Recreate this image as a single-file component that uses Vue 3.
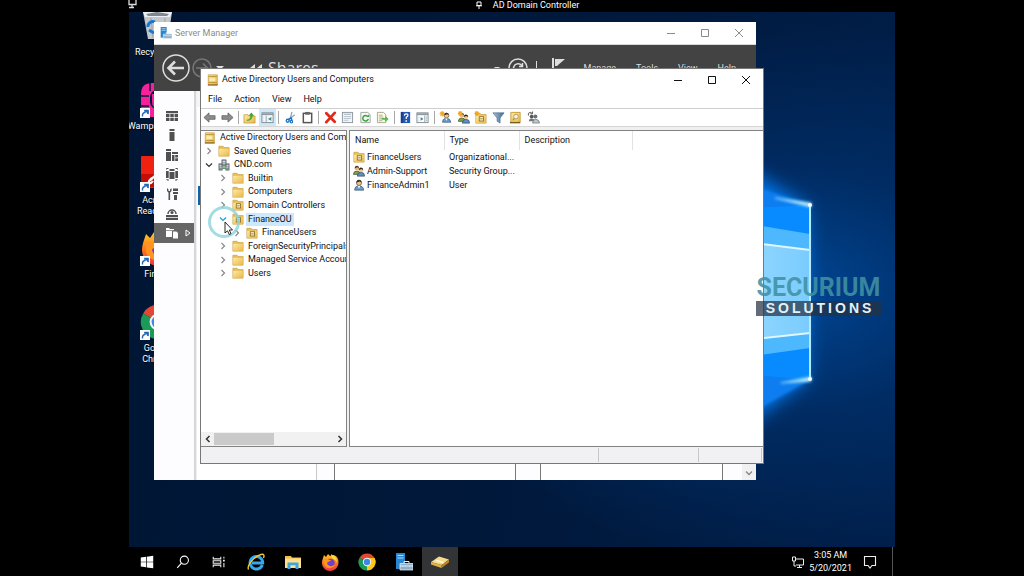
<script setup>
const desktopIcons = [
  { icon: 'd-bin', label: 'Recycle Bin' },
  { icon: 'd-wamp', label: 'Wampserver64', shortcut: true },
  { icon: 'd-acrobat', label: 'Acrobat Reader DC', shortcut: true },
  { icon: 'firefox', label: 'Firefox', shortcut: true },
  { icon: 'chrome', label: 'Google Chrome', shortcut: true },
]

const sideItems = ['s-dash', 's-local', 's-all', 's-ad', 's-dns', 's-iis', 's-file']

const toolGroups = [
  [['t-back', 'Back'], ['t-fwd', 'Forward']],
  [['t-up', 'Up one level'], ['t-tree', 'Show console tree']],
  [['t-cut', 'Cut'], ['t-paste', 'Paste']],
  [['t-del', 'Delete'], ['t-prop', 'Properties'], ['t-refresh', 'Refresh'], ['t-export', 'Export list']],
  [['t-help', 'Help'], ['t-pane', 'Show action pane']],
  [['t-user', 'New user'], ['t-group', 'New group'], ['t-ou', 'New organizational unit'],
    ['t-filter', 'Filter'], ['t-find', 'Find'], ['t-add', 'Add to group']],
]

const tree = [
  { level: 0, icon: 'console', label: 'Active Directory Users and Computers' },
  { level: 1, icon: 'folder', label: 'Saved Queries' },
  { level: 1, icon: 'domain', label: 'CND.com', open: true },
  { level: 2, icon: 'folder', label: 'Builtin' },
  { level: 2, icon: 'folder', label: 'Computers' },
  { level: 2, icon: 'ou', label: 'Domain Controllers' },
  { level: 2, icon: 'ou', label: 'FinanceOU', open: true, selected: true },
  { level: 3, icon: 'ou', label: 'FinanceUsers' },
  { level: 2, icon: 'folder', label: 'ForeignSecurityPrincipals' },
  { level: 2, icon: 'folder', label: 'Managed Service Accounts' },
  { level: 2, icon: 'folder', label: 'Users' },
]

const rows = [
  { icon: 'ou', name: 'FinanceUsers', type: 'Organizational...' },
  { icon: 'group', name: 'Admin-Support', type: 'Security Group...' },
  { icon: 'user', name: 'FinanceAdmin1', type: 'User' },
]

const taskItems = [
  { icon: 'start', label: 'Start', kind: 'small' },
  { icon: 'search', label: 'Search', kind: 'small' },
  { icon: 'taskview', label: 'Task View', kind: 'small' },
  { icon: 'ie', label: 'Internet Explorer' },
  { icon: 'explorer', label: 'File Explorer' },
  { icon: 'firefox', label: 'Firefox' },
  { icon: 'chrome', label: 'Google Chrome' },
  { icon: 'server', label: 'Server Manager' },
  { icon: 'toolbox', label: 'Active Directory Users and Computers', kind: 'active' },
]
</script>

<template>
  <div class="screen">
    <svg class="defs" aria-hidden="true">
      <defs>
        <linearGradient id="gold" x1="0" y1="0" x2="1" y2="1">
          <stop offset="0" stop-color="#ffeaa0" /><stop offset="1" stop-color="#e8b94c" />
        </linearGradient>
        <linearGradient id="fox" x1="0" y1="0" x2="0" y2="1">
          <stop offset="0" stop-color="#ffc928" /><stop offset=".5" stop-color="#ff7a1c" /><stop offset="1" stop-color="#f0304a" />
        </linearGradient>
        <linearGradient id="steel" x1="0" y1="0" x2="1" y2="0">
          <stop offset="0" stop-color="#a9c4dc" /><stop offset="1" stop-color="#40688f" />
        </linearGradient>
      </defs>

      <symbol id="d-bin" viewBox="0 0 36 36">
        <path d="M3 4 32 4 28 31 8 31Z" fill="#c3c8cc" />
        <path d="M3 4 17 1 32 4 30 9 5 9Z" fill="#eef1f3" />
        <path d="M6 6 17 4 29 6 27 8 8 8Z" fill="#7d8890" />
        <path d="M11 10 13 30M25 10 23 30" stroke="#a6adb2" stroke-width="1.500" />
        <path d="M8 19a5 5 0 0 1 7-5M17 16l-1 6M14 25l-5-3" stroke="#1878d0" stroke-width="3" fill="none" />
      </symbol>
      <symbol id="d-wamp" viewBox="0 0 36 36">
        <path d="M12 1h12q11 0 11 11v12q0 11-11 11H12Q1 35 1 24V12Q1 1 12 1Z" fill="#f8209b" />
        <path d="M1 14h8M10 1v8M1 24h8" stroke="#001a3d" stroke-width="1.500" />
        <rect x="10" y="8" width="18" height="19" rx="7" fill="#001a3d" />
        <path d="M14 12v8q0 4 4 4t4-4v-8" stroke="#f8209b" stroke-width="4" fill="none" />
      </symbol>
      <symbol id="d-acrobat" viewBox="0 0 36 36">
        <rect x="1" y="0" width="34" height="32" rx="1" fill="#f0210f" />
        <path d="M1 18h34v13H1Z" fill="#c40e05" />
        <path d="M9 25c5-2 9-10 10-17 0-4-3-3-2 1 2 8 7 13 12 12 4-1 0-4-6-3-7 1-12 4-14 7-1 3 2 3 4 0" fill="none" stroke="#fff" stroke-width="2" />
      </symbol>
      <symbol id="firefox" viewBox="0 0 18 18">
        <path d="M2 5 3 2 5 4 7 1 9 3C14 0 18 5 17.5 10 17 15 13 18 9 18S1 14.500 1 10C1 8 1.500 6.500 2 5Z" fill="url(#fox)" />
        <circle cx="9.500" cy="10" r="4.200" fill="#6f3fd0" />
        <path d="M3 6c3-1 4 1 7 1-1 2-3 1-4 3 1 4 6 4 8 1-1 5-9 6-11 0Z" fill="#ff941f" />
        <path d="M10 1c3 2 6 3 6 9-1-3-3-4-5-5Z" fill="#ffdc3c" />
      </symbol>
      <symbol id="chrome" viewBox="0 0 18 18">
        <path d="M9 9 1.600 4.700A8.500 8.500 0 0 1 16.400 4.700Z" fill="#df4835" />
        <path d="M9 9 16.400 4.700A8.500 8.500 0 0 1 9 17.500Z" fill="#fbc918" />
        <path d="M9 9 9 17.500A8.500 8.500 0 0 1 1.600 4.700Z" fill="#1c9b57" />
        <path d="M9 5h7.600q1.300 3 .5 5.500L12.500 11Z" fill="#fbc918" />
        <circle cx="9" cy="9" r="4.200" fill="#f3f6f8" /><circle cx="9" cy="9" r="3.200" fill="#3f86e8" />
      </symbol>

      <symbol id="s-dash" viewBox="0 0 14 14">
        <path d="M1 2h12v2.200H1ZM1 5h3.500v3H1ZM5.300 5h3.500v3H5.300ZM9.600 5H13v3H9.600ZM1 8.800h3.500V12H1ZM5.300 8.800h3.500V12H5.300ZM9.600 8.800H13V12H9.600Z" fill="#505050" />
      </symbol>
      <symbol id="s-local" viewBox="0 0 14 14"><path d="M4.500 1h5v2h-5ZM4.500 4h5v9h-5Z" fill="#505050" /></symbol>
      <symbol id="s-all" viewBox="0 0 14 14">
        <path d="M1 1h5v2H1ZM1 4h5v9H1ZM7 4h6v2H7ZM7 7h2.500v6H7ZM10.200 7H13v2.500h-2.800ZM10.200 10.200H13V13h-2.800Z" fill="#505050" />
      </symbol>
      <symbol id="s-ad" viewBox="0 0 14 14">
        <path d="M4.500 2h5v2h-5ZM4.500 5h5v7h-5ZM1 4h2.700v7H1ZM10.300 4H13v7h-2.700Z" fill="#505050" />
        <path d="M1.500 2.500V1.500h2M12.500 2.500V1.500h-2M2 12v1h2M12 12v1h-2" stroke="#505050" fill="none" />
      </symbol>
      <symbol id="s-dns" viewBox="0 0 14 14">
        <path d="M2 1v3l1.500 1.500V13h1.600V5.500L6.500 4V1L5 2.500v1.500H3.500V2.500ZM8 1.500h5V4H8ZM8 5h5v2H8ZM9 8h3v5H9Z" fill="#505050" />
      </symbol>
      <symbol id="s-iis" viewBox="0 0 14 14">
        <path d="M3 7a4 4 0 1 1 8 0" stroke="#505050" stroke-width="1.500" fill="none" />
        <circle cx="7" cy="5.500" r="1.600" fill="#505050" /><path d="M1 8h12v2H1ZM1 10.800h12V13H1Z" fill="#505050" />
      </symbol>
      <symbol id="s-file" viewBox="0 0 14 14">
        <path d="M1 2h3l1 1h4v8H1Z" fill="#fff" /><path d="M1 4.500h8" stroke="#9a9a9a" /><path d="M7.500 5h4l2 2v6h-6Z" fill="#fff" stroke="#666" />
      </symbol>

      <symbol id="t-back" viewBox="0 0 14 14">
        <path d="M1 7 6.500 2v3H13v4H6.500v3Z" fill="#8c8c8c" stroke="#5f5f5f" stroke-width=".8" />
      </symbol>
      <symbol id="t-fwd" viewBox="0 0 14 14">
        <path d="M13 7 7.500 2v3H1v4h6.500v3Z" fill="#8c8c8c" stroke="#5f5f5f" stroke-width=".8" />
      </symbol>
      <symbol id="t-up" viewBox="0 0 14 14">
        <path d="M1 4h4.500l1 1.500H13V13H1Z" fill="url(#gold)" stroke="#b98f35" stroke-width=".7" />
        <path d="M4 9.500c3 0 4-2 4-4.500H6L9 1.500 12 5h-1.700c0 3-2 5.500-6.300 5.500Z" fill="#3fa832" />
      </symbol>
      <symbol id="t-tree" viewBox="0 0 14 14">
        <rect x="1" y="2" width="12" height="10.500" fill="#fff" stroke="#7d8790" />
        <path d="M1 3.500h12" stroke="#8d98a1" stroke-width="2" /><path d="M5.500 5v7" stroke="#8d98a1" />
        <path d="M3 6v5M7.500 6v5M11 6v5" stroke="#b9c2c8" stroke-dasharray="1 1" /><path d="M11 6.500v4L7.500 8.500Z" fill="#3a8e8a" />
      </symbol>
      <symbol id="t-cut" viewBox="0 0 14 14">
        <path d="M8.500 1 7 7.500M11.500 4 5.500 9" stroke="#8aa2b5" stroke-width="1.300" />
        <path d="M7.500 7 4.500 9.500M7.500 7 8.500 10" stroke="#1672c6" stroke-width="1.600" />
        <circle cx="4" cy="10.500" r="1.600" fill="none" stroke="#1672c6" stroke-width="1.400" />
        <circle cx="8" cy="11.500" r="1.300" fill="none" stroke="#1672c6" stroke-width="1.300" />
      </symbol>
      <symbol id="t-paste" viewBox="0 0 14 14">
        <rect x="2.500" y="2.500" width="9" height="10" fill="#fff" stroke="#555" stroke-width="1.600" />
        <path d="M4.500 1h5v3h-5Z" fill="#666" />
      </symbol>
      <symbol id="t-del" viewBox="0 0 14 14">
        <path d="M2.500 2.500 11.500 11.500M11.500 2 2.500 12" stroke="#df2a1c" stroke-width="3" stroke-linecap="round" />
      </symbol>
      <symbol id="t-prop" viewBox="0 0 14 14">
        <rect x="1.500" y="1.500" width="11" height="11" fill="#f3f6f8" stroke="#8b969e" />
        <path d="M3 3.500h8" stroke="#9db0be" /><path d="M3 6h8M3 8h8M3 10h5" stroke="#b8c2c9" />
      </symbol>
      <symbol id="t-refresh" viewBox="0 0 14 14">
        <path d="M2 1.500h7.500L12 4v8.500H2Z" fill="#f7faf7" stroke="#9aa39d" />
        <path d="M9.500 6A3 3 0 1 0 10 8.500" fill="none" stroke="#37a33b" stroke-width="1.600" /><path d="M8 6.500h3V3.500Z" fill="#37a33b" />
      </symbol>
      <symbol id="t-export" viewBox="0 0 14 14">
        <path d="M1.500 1.500H8L10.500 4v8.500h-9Z" fill="#fffde8" stroke="#a5a38b" />
        <path d="M3 4.500h4M3 6.500h5M3 8.500h3M3 10.500h4" stroke="#a9a78f" /><path d="M6 7.500h4V5l3.500 3.500L10 12V9.500H6Z" fill="#57b947" />
      </symbol>
      <symbol id="t-help" viewBox="0 0 14 14">
        <rect x="2" y="1" width="10" height="12" fill="#2557b0" /><path d="M2 1h2v12H2Z" fill="#173c86" />
        <path d="M5.800 5q0-2 2-2t1.800 1.800q0 1-1.800 2V8.500" stroke="#fff" stroke-width="1.300" fill="none" /><path d="M7 10h1.600v1.500H7Z" fill="#fff" />
      </symbol>
      <symbol id="t-pane" viewBox="0 0 14 14">
        <rect x="1" y="2" width="12" height="10.500" fill="#fff" stroke="#7d8790" /><path d="M1 3.500h12" stroke="#8d98a1" stroke-width="2" />
        <path d="M9.500 5v7" stroke="#8d98a1" /><path d="M3 6v5" stroke="#b9c2c8" stroke-dasharray="1 1" />
        <path d="M5 6.500v4L8 8.500Z" fill="#3a8e8a" /><path d="M11.300 6v5" stroke="#8d98a1" stroke-dasharray="1 1" />
      </symbol>
      <symbol id="user" viewBox="0 0 14 14">
        <path d="M2 13q0-5 5-5t5.500 5Z" fill="#6b9cc8" stroke="#35506a" stroke-width=".8" />
        <path d="M5.500 8 7 11 8.500 8Z" fill="#fff" /><circle cx="7" cy="4.600" r="3" fill="#f0c48e" stroke="#3f3520" stroke-width=".7" />
        <path d="M4 4.500Q4 1 7 1t3 3L8 3Z" fill="#3a3025" />
      </symbol>
      <symbol id="group" viewBox="0 0 14 14">
        <path d="M.500 11q0-4 4-4t4 4Z" fill="#7fa34a" stroke="#35451f" stroke-width=".7" /><circle cx="4.500" cy="4" r="2.500" fill="#e6b67d" />
        <path d="M1.800 4Q2 .800 4.600 1T7 4L5 2.600Z" fill="#4b3a22" />
        <path d="M5 13q0-4.500 4.300-4.500T13.500 13Z" fill="#5d8fc4" stroke="#263e58" stroke-width=".7" /><circle cx="9.300" cy="6" r="2.500" fill="#f0c48e" />
        <path d="M6.600 6q.2-3.200 2.800-3T12 6L9.800 4.600Z" fill="#30281e" />
      </symbol>
      <symbol id="t-user" viewBox="0 0 14 14"><use href="#user" x="2" width="12" height="14" /><path d="M3.500 0v6M.500 3h6M1.500 1l4 4M5.500 1l-4 4" stroke="#f4a51c" stroke-width="1.200" /></symbol>
      <symbol id="t-group" viewBox="0 0 14 14"><use href="#group" x="1" y="1" width="13" height="13" /><path d="M3.500 0v5M1 2.500h5M1.700.7l3.600 3.600M5.300.7 1.700 4.300" stroke="#f4a51c" stroke-width="1.200" /></symbol>
      <symbol id="folder" viewBox="0 0 14 14">
        <path d="M1 1.500h5l1 1.500H13v10H1Z" fill="#e9bf57" stroke="#c4993c" stroke-width=".7" /><path d="M1.400 4.500H12.600v8.100H1.400Z" fill="url(#gold)" />
      </symbol>
      <symbol id="ou" viewBox="0 0 14 14">
        <path d="M1 1.500h5l1 1.500H13v10H1Z" fill="#e9bf57" stroke="#c4993c" stroke-width=".7" /><path d="M1.400 4.500H12.600v8.100H1.400Z" fill="url(#gold)" />
        <rect x="5" y="5.500" width="5" height="5" fill="#fff6d0" stroke="#8a6f28" /><path d="M6 8h3" stroke="#8a6f28" />
      </symbol>
      <symbol id="t-ou" viewBox="0 0 14 14"><use href="#ou" x="1" y="1" width="13" height="13" /><path d="M3 0v5M.500 2.500h5M1.200.7l3.600 3.600M4.800.7 1.200 4.300" stroke="#f4a51c" stroke-width="1.200" /></symbol>
      <symbol id="t-filter" viewBox="0 0 14 14"><path d="M1 2h12L8.700 7.500V13L5.500 11V7.500Z" fill="url(#steel)" stroke="#4b6c8a" stroke-width=".7" /></symbol>
      <symbol id="t-find" viewBox="0 0 14 14">
        <path d="M2 1.500h10v11H2Z" fill="url(#gold)" stroke="#c79a35" /><path d="M1 12.500h11" stroke="#7d5d18" stroke-width="1.500" />
        <circle cx="7.500" cy="6" r="2.500" fill="#f2f3e6" stroke="#b59c58" /><path d="M5.800 8 4 10" stroke="#a08a4c" stroke-width="1.300" />
      </symbol>
      <symbol id="t-add" viewBox="0 0 14 14">
        <path d="M1.500 5V2.500Q3 .5 6 2.500M6 .5V3H3.500" fill="none" stroke="#555" /><circle cx="5" cy="6" r="2" fill="#555" /><circle cx="9" cy="6" r="2.200" fill="#6f6f6f" />
        <path d="M2 11q0-3 3-3t4 3Z" fill="#777" /><path d="M6 13q0-4 3.500-4t4 4Z" fill="#b9c8d2" stroke="#666" stroke-width=".7" />
      </symbol>
      <symbol id="console" viewBox="0 0 14 14">
        <path d="M1.500 1H12v12H1.500Z" fill="url(#gold)" stroke="#bd902e" stroke-width=".8" /><path d="M2 3h9.500M2 10h9.500" stroke="#b88a2a" />
        <path d="M3.500 5h6v3h-6Z" fill="#fff0b8" /><path d="M1 12.700h11.500" stroke="#80611c" stroke-width="1.200" />
      </symbol>
      <symbol id="domain" viewBox="0 0 14 14">
        <path d="M4.500 1h5v7h-5ZM1 5.500h4V13H1ZM9 5.500h4V13H9Z" fill="#8b949b" stroke="#596066" stroke-width=".7" />
        <path d="M5.500 2.800h3M5.500 4.800h3M2 7.500h2M2 9.500h2M10 7.500h2M10 9.500h2" stroke="#e7eff4" /><path d="M5 11h4M7 8v3" stroke="#4ba15c" stroke-width="1.300" />
      </symbol>

      <symbol id="start" viewBox="0 0 18 18"><path d="M2 4 8 3.200v5.400H2ZM8.800 3.100 16 2v6.600H8.800ZM2 9.400h6V15l-6-.9ZM8.800 9.400H16V16l-7.200-.9Z" fill="#fff" /></symbol>
      <symbol id="search" viewBox="0 0 18 18"><circle cx="10.500" cy="7" r="4.600" fill="none" stroke="#fff" stroke-width="1.200" /><path d="M7.300 10.300 2.500 15.500" stroke="#fff" stroke-width="1.300" /></symbol>
      <symbol id="taskview" viewBox="0 0 18 18">
        <path d="M2.500 3v2.500H11V3M2.500 15v-2.500H11V15M2.500 7.500H11v3H2.500ZM14.500 3v2M14.500 10v5" stroke="#eee" stroke-width="1.200" fill="none" /><path d="M13.500 6.500h2v2h-2Z" fill="#eee" />
      </symbol>
      <symbol id="ie" viewBox="0 0 18 18">
        <path d="M15.300 12A6.300 6.300 0 1 1 15.700 10H5" fill="none" stroke="#36a8ec" stroke-width="3" />
        <path d="M1.500 16.500C-.5 12 8 3 14 1.500c3-.8 3.500 1 2.500 3.500" fill="none" stroke="#f6c832" stroke-width="1.400" />
      </symbol>
      <symbol id="explorer" viewBox="0 0 18 18">
        <path d="M1 3h6l1 1.500h9V15H1Z" fill="#f1bd45" /><path d="M1 5.500h16V15H1Z" fill="#ffe08c" /><path d="M3.500 16V9.500h11V16h-3v-3.700H6.500V16Z" fill="#3fa5e0" />
      </symbol>
      <symbol id="server" viewBox="0 0 18 18">
        <path d="M1 0h9v16H1Z" fill="#2a86cf" /><path d="M2.500 2.500h6M2.500 5h6" stroke="#a9d8f7" stroke-width="1.200" />
        <path d="M5 10.500h13V17H5Z" fill="#8eafc8" stroke="#dceaf3" stroke-width=".8" /><path d="M9 10V8.500h5V10M5 13h13" stroke="#e8f2f8" fill="none" />
      </symbol>
      <symbol id="toolbox" viewBox="0 0 18 18">
        <path d="M0 9 8 3.500 18 6.500 10.500 12Z" fill="#f5dc8c" /><path d="M0 9 10.500 12v3L0 11.500Z" fill="#e0b24d" /><path d="M10.500 12 18 6.500v3L10.500 15Z" fill="#b98328" />
        <path d="M5 7.500 13 9.700" stroke="#fff8d5" stroke-width="1.500" />
      </symbol>
    </svg>

    <header class="session">
      <svg class="session-monitor" viewBox="0 0 10 10"><path d="M2 0V4.500H9V0M5 5v2M2 7.500h5" stroke="#ddd" fill="none" stroke-width="1.300" /></svg>
      <svg class="session-pin" viewBox="0 0 8 8"><path d="M2 1h4v3.500H2ZM1 4.800h6M4 5v3" stroke="#fff" fill="none" /></svg>
      <span>AD Domain Controller</span>
    </header>

    <main class="desktop">
      <svg class="wallpaper" viewBox="0 0 150 535" preserveAspectRatio="none" aria-hidden="true">
        <defs>
          <filter id="soft" x="-40%" y="-40%" width="180%" height="180%"><feGaussianBlur stdDeviation="9" /></filter>
          <filter id="glint" x="-50%" y="-50%" width="200%" height="200%"><feGaussianBlur stdDeviation="1.500" /></filter>
          <linearGradient id="pale" x1="0" y1="0" x2="1" y2="0"><stop offset="0" stop-color="#92d7ff" /><stop offset="1" stop-color="#7accfe" /></linearGradient>
        </defs>
        <path d="M0 155 62 194 62 368 0 415Z" fill="#0074e6" filter="url(#soft)" />
        <path d="M0 171 65 193 65 368 0 405Z" fill="#0a7df0" filter="url(#glint)" />
        <path d="M0 196 65 193V368L0 362Z" fill="#078bff" />
        <path d="M0 211 65 222V336L0 345Z" fill="#4eb8ff" />
        <path d="M0 230 65 238V321L0 328Z" fill="url(#pale)" />
        <path d="M0 230 65 238M0 328 65 321" stroke="#dff6ff" stroke-width="2" />
        <path d="M65 193V368" stroke="#b5e9ff" stroke-width="2" />
        <path d="M30 186 66 191 66 195ZM36 371 66 365 66 369Z" fill="#c4f0ff" stroke="#8fdcff" filter="url(#glint)" />
        <circle cx="65" cy="193" r="2" fill="#fff" /><circle cx="65" cy="367" r="2" fill="#fff" />
      </svg>

      <ul class="shortcuts">
        <li v-for="item in desktopIcons" :key="item.label">
          <span class="shortcut-pic">
            <svg><use :href="'#' + item.icon" /></svg>
            <svg v-if="item.shortcut" class="badge" viewBox="0 0 10 10">
              <rect width="10" height="10" fill="#fff" /><path d="M2.500 8.500Q2 5 5 4.500V2.500H8V6" stroke="#2468b5" stroke-width="1.400" fill="none" /><path d="M4 2h4.500v4.500Z" fill="#2468b5" />
            </svg>
          </span>
          <span class="shortcut-label">{{ item.label }}</span>
        </li>
      </ul>

      <section class="window manager" aria-label="Server Manager">
        <div class="titlebar">
          <svg class="title-icon"><use href="#server" /></svg>
          <h2>Server Manager</h2>
          <div class="controls">
            <button aria-label="Minimize"><svg viewBox="0 0 10 10"><path d="M1 5.500h8" /></svg></button>
            <button aria-label="Maximize"><svg viewBox="0 0 10 10"><path d="M1.500 1.500h7v7h-7Z" /></svg></button>
            <button aria-label="Close"><svg viewBox="0 0 10 10"><path d="M1 1 9 9M9 1 1 9" /></svg></button>
          </div>
        </div>
        <div class="banner">
          <button class="nav-back" aria-label="Back">
            <svg viewBox="0 0 28 28"><circle cx="14" cy="14" r="13" /><path d="M22 14H7M13 7.500 6.500 14 13 20.500" stroke-width="2.600" /></svg>
          </button>
          <button class="nav-fwd" aria-label="Forward">
            <svg viewBox="0 0 20 20"><circle cx="10" cy="10" r="9" /><path d="M4 10H15M11 5.500 15.500 10 11 14.500" /></svg>
          </button>
          <svg class="caret" viewBox="0 0 8 8"><path d="M0 2H8L4 6Z" /></svg>
          <svg class="crumb-sep" viewBox="0 0 12 8"><path d="M0 4 5 0V8ZM7 4 12 0V8Z" /></svg>
          <span class="crumb">Shares</span>
          <svg class="caret push" viewBox="0 0 8 8"><path d="M1 3H7L4 6Z" /></svg>
          <button class="reload" aria-label="Refresh">
            <svg viewBox="0 0 20 20"><circle cx="10" cy="10" r="9" /><path d="M14 8A4.500 4.500 0 1 0 14.500 11M14.500 5v3.500H11" /></svg>
          </button>
          <span class="bar"></span>
          <button class="flag" aria-label="Notifications">
            <svg viewBox="0 0 14 22"><path d="M1 1V22" stroke="#ddd" stroke-width="2" /><path d="M3 2H13L5 9H3Z" fill="#ddd" /></svg>
          </button>
          <nav>
            <button>Manage</button><button>Tools</button><button>View</button><button>Help</button>
          </nav>
        </div>
        <div class="manager-body">
          <div class="side">
            <button v-for="(s, i) in sideItems" :key="s" :class="{ on: i === 6 }" :aria-label="'Section ' + (i + 1)">
              <svg class="side-icon"><use :href="'#' + s" /></svg>
              <svg v-if="i === 6" class="side-arrow" viewBox="0 0 6 8"><path d="M1 1 5 4 1 7Z" fill="none" stroke="#fff" /></svg>
            </button>
          </div>
          <div class="rail"></div>
          <div class="tiles">
            <div class="tile a"><i></i></div>
            <div class="gap b"></div>
            <div class="tile c"></div>
            <div class="gap d"></div>
            <div class="tile e"></div>
            <div class="gap f"></div>
          </div>
          <div class="vscroll"><svg viewBox="0 0 8 8"><path d="M1 2.500 4 5.500 7 2.500" fill="none" stroke="#888" stroke-width="1.300" /></svg></div>
        </div>
      </section>

      <section class="window aduc" aria-label="Active Directory Users and Computers">
        <div class="titlebar">
          <svg class="title-icon"><use href="#console" /></svg>
          <h1>Active Directory Users and Computers</h1>
          <div class="controls">
            <button aria-label="Minimize"><svg viewBox="0 0 10 10"><path d="M1 5.500h8" /></svg></button>
            <button aria-label="Maximize"><svg viewBox="0 0 10 10"><path d="M1.500 1.500h7v7h-7Z" /></svg></button>
            <button aria-label="Close"><svg viewBox="0 0 10 10"><path d="M1 1 9 9M9 1 1 9" /></svg></button>
          </div>
        </div>
        <nav class="menu">
          <button>File</button><button>Action</button><button>View</button><button>Help</button>
        </nav>
        <div class="toolbar">
          <div class="tools" role="toolbar">
            <template v-for="(group, g) in toolGroups" :key="g">
              <span v-if="g" class="tool-sep"></span>
              <button v-for="[icon, label] in group" :key="icon" :class="{ pressed: icon === 't-tree' }" :aria-label="label">
                <svg><use :href="'#' + icon" /></svg>
              </button>
            </template>
          </div>
        </div>
        <div class="panes">
          <div class="pane tree-pane">
            <ul class="tree" role="tree">
              <li v-for="node in tree" :key="node.label" role="treeitem" :class="['l' + node.level, { selected: node.selected, open: node.open }]">
                <button v-if="node.level" class="twist" :aria-label="'Toggle ' + node.label">
                  <svg viewBox="0 0 8 8"><path :d="node.open ? 'M1 2.500 4 5.500 7 2.500' : 'M2.500 1 5.500 4 2.500 7'" /></svg>
                </button>
                <svg class="node-icon"><use :href="'#' + node.icon" /></svg>
                <span class="node-label">{{ node.label }}</span>
              </li>
            </ul>
            <div class="hscroll">
              <button aria-label="Scroll left"><svg viewBox="0 0 8 8"><path d="M5.500 1 2.500 4 5.500 7" /></svg></button>
              <span class="track"><span class="thumb"></span></span>
              <button aria-label="Scroll right"><svg viewBox="0 0 8 8"><path d="M2.500 1 5.500 4 2.500 7" /></svg></button>
            </div>
          </div>
          <div class="pane list-pane">
            <table>
              <colgroup><col class="c-name" /><col class="c-type" /><col class="c-desc" /><col /></colgroup>
              <thead><tr><th>Name</th><th>Type</th><th>Description</th><th></th></tr></thead>
              <tbody>
                <tr v-for="r in rows" :key="r.name">
                  <td><span class="name"><svg><use :href="'#' + r.icon" /></svg>{{ r.name }}</span></td>
                  <td>{{ r.type }}</td><td></td><td></td>
                </tr>
              </tbody>
            </table>
          </div>
        </div>
        <footer class="status"><span class="s-main"></span><span class="s-mid"></span><span class="s-end"></span></footer>
      </section>

      <svg class="pointer" viewBox="0 0 36 36" aria-hidden="true">
        <circle cx="17" cy="17" r="14.500" fill="none" stroke="#8fd3da" stroke-opacity=".8" stroke-width="3" />
        <path d="M18 17V28L20.500 25.800 22.300 29.500 24 28.700 22.300 25H25.500Z" fill="#fff" stroke="#111" stroke-width=".9" />
      </svg>

      <div class="watermark"><strong>SECURIUM</strong><span>SOLUTIONS</span></div>
    </main>

    <footer class="taskbar">
      <div class="tasks">
        <button v-for="t in taskItems" :key="t.icon" :class="t.kind" :aria-label="t.label"><svg><use :href="'#' + t.icon" /></svg></button>
      </div>
      <div class="tray">
        <svg class="net" viewBox="0 0 14 14"><path d="M5 4h7.500v6H5M8.500 10v2.500M6 12.500h5" fill="none" stroke="#eee" /><path d="M1.500 2h3v4h-3ZM3 6v5h2" fill="none" stroke="#eee" /></svg>
        <time>3:05 AM<br />5/20/2021</time>
        <svg class="note" viewBox="0 0 14 14"><path d="M1.500 1.500h11v9H9L7 13 5 10.500H1.500Z" fill="none" stroke="#eee" stroke-width="1.100" /></svg>
        <span class="peek"></span>
      </div>
    </footer>
  </div>
</template>

<style>
html, body { margin: 0; background: #000; }
</style>

<style scoped>
* { box-sizing: border-box; }
.screen {
  display: flex; flex-direction: column; height: 100vh; padding: 0 129px; background: #000;
  overflow: hidden; color: #111; font: 9px/13px Roboto, "Noto Sans", sans-serif;
}
.defs { position: absolute; width: 0; height: 0; }
button { margin: 0; padding: 0; border: 0; background: none; font: inherit; color: inherit; display: flex; align-items: center; justify-content: center; }
ul { margin: 0; padding: 0; list-style: none; }
h1, h2 { margin: 0; font: inherit; }
svg { display: block; flex: none; }

.session { position: relative; display: flex; align-items: center; justify-content: center; gap: 10px; height: 12px; padding: 0 0 2px 30px; color: #fff; line-height: 10px; }
.session-monitor { position: absolute; left: -2px; top: 0; width: 10px; height: 10px; }
.session-pin { width: 8px; height: 8px; }

.desktop {
  position: relative; flex: 1; overflow: hidden;
  background:
    radial-gradient(ellipse 400px 270px at 86% 52%, rgba(0, 92, 190, .66), rgba(0, 64, 140, .42) 45%, rgba(0, 30, 70, 0) 100%),
    linear-gradient(100deg, #001634 0%, #00183a 50%, #001f4a 100%);
}
.wallpaper { position: absolute; right: 0; top: 0; width: 150px; height: 100%; }

.shortcuts { position: absolute; left: 0; top: -4px; width: 58px; }
.shortcuts li { height: 74px; display: flex; flex-direction: column; align-items: center; }
.shortcut-pic { position: relative; width: 36px; height: 36px; }
.shortcut-pic svg { width: 36px; height: 36px; }
.shortcut-pic .badge { position: absolute; left: 0; bottom: 0; width: 10px; height: 10px; }
.shortcut-label { color: #fff; line-height: 11px; text-align: center; text-shadow: 0 1px 1px #000; padding-top: 3px; }

.window { position: absolute; display: flex; flex-direction: column; background: #fff; }
.titlebar { display: flex; align-items: center; height: 22px; flex: none; }
.title-icon { width: 12px; height: 12px; margin: 0 3px 0 6px; }
.controls { display: flex; margin-left: auto; }
.controls button { width: 34px; height: 22px; }
.controls svg { width: 10px; height: 10px; fill: none; stroke: currentColor; }

.manager { left: 25px; right: 139px; top: 10px; height: 458px; }
.manager .titlebar { color: #8b8b8b; }
.banner { display: flex; align-items: center; height: 47px; flex: none; padding: 0 20px 0 8px; border-top: 1px solid #d8d8d8; background: #434343; color: #ddd; }
.banner svg { fill: none; stroke: #ddd; stroke-width: 1.500; }
.nav-back svg { width: 28px; height: 28px; }
.nav-back { margin-right: 2px; }
.banner .nav-fwd svg { width: 20px; height: 20px; stroke: #777; }
.banner .caret { width: 8px; height: 8px; margin-left: 4px; fill: #ddd; stroke: none; }
.banner .crumb-sep { width: 12px; height: 8px; margin-left: 26px; fill: #ddd; stroke: none; }
.crumb { margin-left: 6px; font: 16px/20px "Open Sans", sans-serif; }
.banner .push { margin-left: auto; }
.reload { margin-left: 7px; }
.reload svg { width: 20px; height: 20px; }
.bar { width: 1px; height: 14px; margin-left: 8px; background: #ddd; }
.flag { margin: 0 18px 0 15px; }
.flag svg { width: 14px; height: 22px; stroke: none; }
.banner nav { display: flex; gap: 20px; }
.manager-body { display: flex; flex: 1; min-height: 0; background: #fdfcfe; }
.side { width: 40px; padding-top: 15px; display: grid; height: 152px; grid-template-rows: repeat(7, 1fr); }
.side button { justify-content: flex-start; padding-left: 11px; gap: 6px; }
.side .on { background: #666; }
.side-icon { width: 14px; height: 14px; }
.side-arrow { width: 6px; height: 8px; }
.rail { width: 3px; background: #d6d6da; border-right: 1px solid #f1f1f4; }
.tiles { display: flex; flex: 1; border-top: 16px solid #f5f5f7; }
.tile { border-right: 1px solid #777; background: #fff; }
.gap { border-right: 1px solid #777; }
.a { flex: 119; border-color: #c9c9c9; padding: 79px 0 0 1px; }
.a i { display: block; width: 2px; height: 19px; background: #0a64ad; }
.b { flex: 18; } .c { flex: 182; } .d { flex: 24; } .e { flex: 183; } .f { flex: 19; border: 0; }
.vscroll { width: 14px; background: #f1f1f1; display: flex; align-items: flex-end; justify-content: center; padding-bottom: 3px; }
.vscroll svg { width: 8px; height: 8px; }

.aduc { left: 71px; right: 131px; top: 56px; height: 396px; border: 1px solid #777; }
.aduc .titlebar { height: 21px; }
.menu { display: flex; gap: 12px; height: 18px; flex: none; padding: 1px 0 0 7px; }
.toolbar { flex: none; height: 22px; padding: 0 0 4px; border-top: 1px solid #cfcfcf; background: linear-gradient(#fff 17px, #d5d5d5 17px, #d5d5d5 18px, #f0f0f0 18px); }
.tools { display: flex; align-items: center; width: 341px; height: 17px; }
.tools button { flex: 1; height: 17px; }
.tools svg { width: 13px; height: 13px; }
.tools .pressed { background: #cde8fb; }
.tool-sep { width: 5px; height: 13px; background: linear-gradient(90deg, transparent 2px, #a8a8a8 2px, #a8a8a8 3px, transparent 3px); }
.panes { display: flex; flex: 1; min-height: 0; gap: 2px; background: #f0f0f0; }
.pane { border: 1px solid #828282; background: #fff; overflow: hidden; }
.tree-pane { width: 146px; border-left: 0; display: flex; flex-direction: column; justify-content: space-between; }
.tree { display: grid; grid-template-rows: repeat(11, 1fr); height: 149px; }
.tree li { display: flex; align-items: center; padding-left: 1px; white-space: nowrap; min-width: 0; }
.tree .l2 { padding-left: 15px; }
.tree .l3 { padding-left: 29px; }
.twist { width: 14px; height: 13px; flex: none; }
.twist svg { width: 8px; height: 8px; fill: none; stroke: #888; stroke-width: 1.200; }
.open .twist svg { stroke: #333; }
.selected .twist svg { stroke: #1a9be0; }
.node-icon { width: 12px; height: 12px; margin: 0 2px; }
.node-label { padding: 0 2px; line-height: 13px; }
.selected .node-label { background: #cce8ff; }
.hscroll { display: flex; height: 14px; flex: none; background: #f1f1f1; }
.hscroll button { width: 13px; }
.hscroll svg { width: 8px; height: 8px; fill: none; stroke: #333; stroke-width: 1.500; }
.track { flex: 1; padding: 1px 0; display: flex; }
.thumb { width: 50%; background: #c9cac9; }
.list-pane { flex: 1; border-right: 0; }
table { width: 100%; table-layout: fixed; border-collapse: collapse; }
.c-name { width: 94px; } .c-type { width: 75px; } .c-desc { width: 113px; }
th, td { padding: 0 0 0 5px; text-align: left; font-weight: normal; white-space: nowrap; }
th { height: 19px; border-right: 1px solid #e2e2e2; }
th:last-child { border: 0; }
td { height: 14px; }
td:first-child { padding-left: 3px; }
.name { display: flex; align-items: center; gap: 2px; }
.name svg { width: 12px; height: 12px; }
.status { display: flex; flex: none; height: 16px; padding: 1px; background: #f1f0f2; }
.status span { border-right: 1px solid #c8c8c8; }
.s-main { flex: 1; } .s-mid { width: 100px; } .s-end { width: 63px; }

.pointer { position: absolute; left: 78px; top: 193px; width: 36px; height: 36px; }

.watermark { position: absolute; right: 14px; top: 263px; width: 125px; text-align: center; }
.watermark strong { display: block; font: bold 25px/26px Roboto, "Liberation Sans", sans-serif; color: rgba(64, 145, 163, .88); }
.watermark span { display: block; font: bold 14px/15px "Liberation Sans", sans-serif; letter-spacing: 3px; padding-left: 3px; color: #e2f2fb; background: rgba(38, 50, 66, .72); }

.taskbar { display: flex; justify-content: space-between; height: 29px; flex: none; background: #000; color: #fff; }
.tasks, .tray { display: flex; align-items: center; }
.tasks button { width: 37px; height: 29px; }
.tasks .small { width: 36px; }
.tasks .active { background: #333436; width: 36px; }
.tasks svg { width: 18px; height: 18px; }
.tasks .small svg { width: 16px; height: 16px; }
.net { width: 14px; height: 14px; margin-right: 4px; }
time { text-align: center; line-height: 13px; padding-top: 1px; }
.note { width: 14px; height: 14px; margin: 0 15px 0 11px; }
.peek { width: 1px; height: 29px; margin-right: 2px; background: #555; }
</style>
